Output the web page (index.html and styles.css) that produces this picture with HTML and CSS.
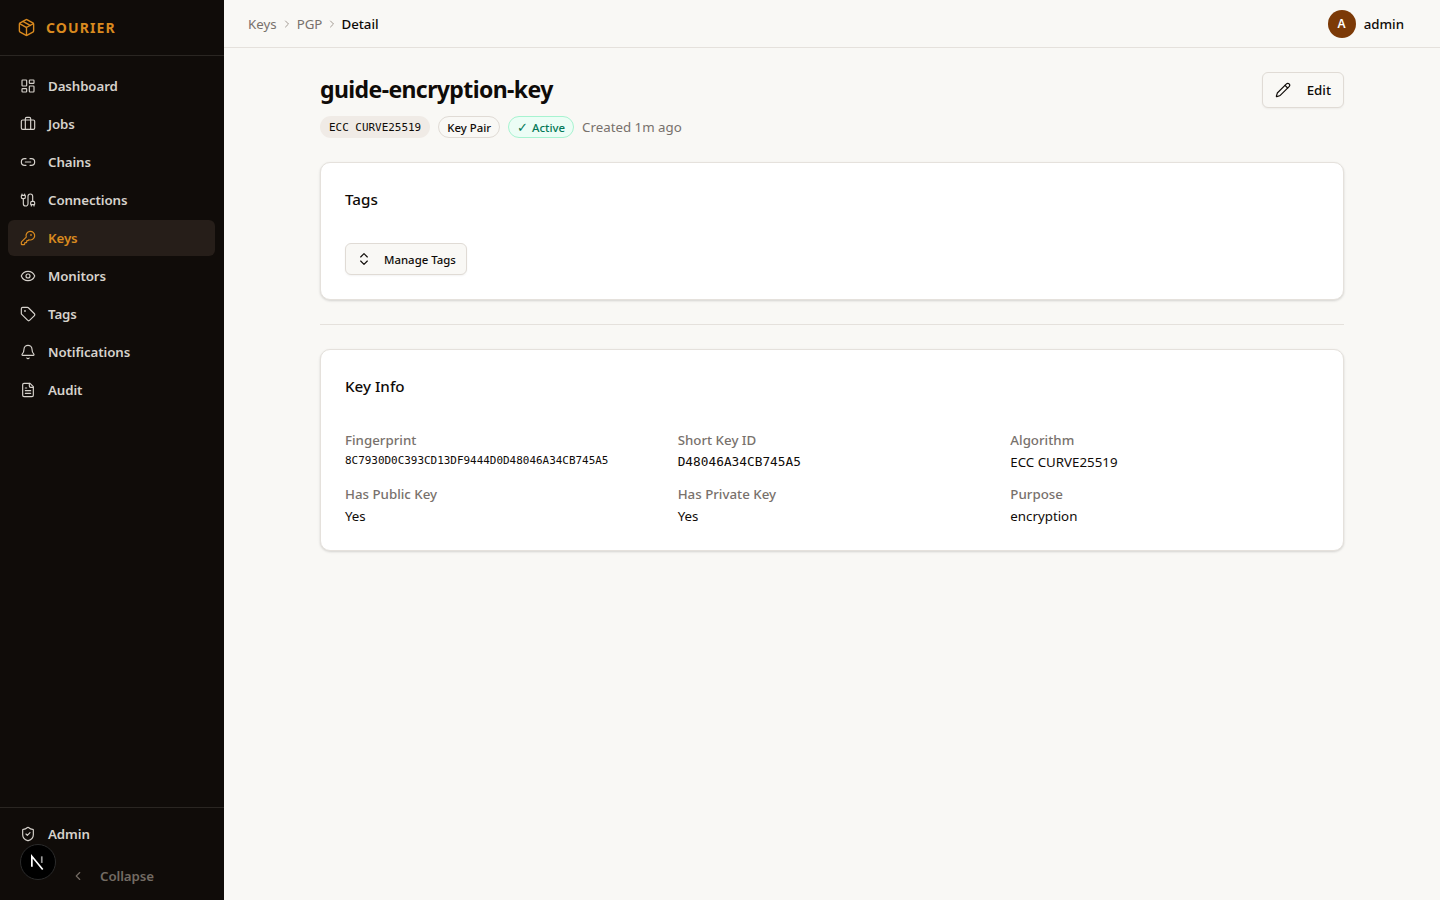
FILE: index.html
```html
<!DOCTYPE html>
<html lang="en">
<head>
<meta charset="utf-8">
<title>guide-encryption-key</title>
<link rel="stylesheet" href="styles.css">
</head>
<body>
<div class="app">
  <aside class="sidebar">
    <div class="brand">
      <svg class="brand-icon" viewBox="0 0 24 24"><path d="M11 21.73a2 2 0 0 0 2 0l7-4A2 2 0 0 0 21 16V8a2 2 0 0 0-1-1.73l-7-4a2 2 0 0 0-2 0l-7 4A2 2 0 0 0 3 8v8a2 2 0 0 0 1 1.73z"/><path d="M12 22V12"/><path d="m3.3 7 7.7 4.4a2 2 0 0 0 2 0L20.7 7"/><path d="m7.5 4.27 9 5.15"/></svg>
      <span class="brand-name">COURIER</span>
    </div>
    <nav class="nav">
      <a class="nav-item"><svg class="ico" viewBox="0 0 24 24"><rect x="3" y="3" width="7" height="9" rx="1"/><rect x="14" y="3" width="7" height="5" rx="1"/><rect x="14" y="12" width="7" height="9" rx="1"/><rect x="3" y="16" width="7" height="5" rx="1"/></svg>Dashboard</a>
      <a class="nav-item"><svg class="ico" viewBox="0 0 24 24"><path d="M16 20V4a2 2 0 0 0-2-2h-4a2 2 0 0 0-2 2v16"/><rect x="2" y="6" width="20" height="14" rx="2"/></svg>Jobs</a>
      <a class="nav-item"><svg class="ico" viewBox="0 0 24 24"><path d="M9 17H7A5 5 0 0 1 7 7h2"/><path d="M15 7h2a5 5 0 1 1 0 10h-2"/><line x1="8" x2="16" y1="12" y2="12"/></svg>Chains</a>
      <a class="nav-item"><svg class="ico" viewBox="0 0 24 24"><path d="M17 19a1 1 0 0 1-1-1v-2a2 2 0 0 1 2-2h2a2 2 0 0 1 2 2v2a1 1 0 0 1-1 1z"/><path d="M17 21v-2"/><path d="M19 14V6.500a1 1 0 0 0-7 0v11a1 1 0 0 1-7 0V10"/><path d="M21 21v-2"/><path d="M3 5V3"/><path d="M4 10a2 2 0 0 1-2-2V6a1 1 0 0 1 1-1h4a1 1 0 0 1 1 1v2a2 2 0 0 1-2 2z"/><path d="M7 5V3"/></svg>Connections</a>
      <a class="nav-item active"><svg class="ico" viewBox="0 0 24 24"><path d="M2.586 17.414A2 2 0 0 0 2 18.828V21a1 1 0 0 0 1 1h3a1 1 0 0 0 1-1v-1a1 1 0 0 1 1-1h1a1 1 0 0 0 1-1v-1a1 1 0 0 1 1-1h.172a2 2 0 0 0 1.414-.586l.814-.814a6.500 6.500 0 1 0-4-4z"/><circle cx="16.500" cy="7.500" r=".5"/></svg>Keys</a>
      <a class="nav-item"><svg class="ico" viewBox="0 0 24 24"><path d="M2.062 12.348a1 1 0 0 1 0-.696 10.750 10.750 0 0 1 19.876 0 1 1 0 0 1 0 .696 10.750 10.750 0 0 1-19.876 0"/><circle cx="12" cy="12" r="3"/></svg>Monitors</a>
      <a class="nav-item"><svg class="ico" viewBox="0 0 24 24"><path d="M12.586 2.586A2 2 0 0 0 11.172 2H4a2 2 0 0 0-2 2v7.172a2 2 0 0 0 .586 1.414l8.704 8.704a2.426 2.426 0 0 0 3.420 0l6.580-6.580a2.426 2.426 0 0 0 0-3.420z"/><circle cx="7.500" cy="7.500" r=".5"/></svg>Tags</a>
      <a class="nav-item"><svg class="ico" viewBox="0 0 24 24"><path d="M10.268 21a2 2 0 0 0 3.464 0"/><path d="M3.262 15.326A1 1 0 0 0 4 17h16a1 1 0 0 0 .740-1.673C19.410 13.956 18 12.499 18 8A6 6 0 0 0 6 8c0 4.499-1.411 5.956-2.738 7.326"/></svg>Notifications</a>
      <a class="nav-item"><svg class="ico" viewBox="0 0 24 24"><path d="M15 2H6a2 2 0 0 0-2 2v16a2 2 0 0 0 2 2h12a2 2 0 0 0 2-2V7z"/><path d="M14 2v4a2 2 0 0 0 2 2h4"/><path d="M10 9H8"/><path d="M16 13H8"/><path d="M16 17H8"/></svg>Audit</a>
    </nav>
    <div class="side-foot">
      <a class="nav-item"><svg class="ico" viewBox="0 0 24 24"><path d="M20 13c0 5-3.500 7.500-7.660 8.950a1 1 0 0 1-.670-.010C7.500 20.500 4 18 4 13V6a1 1 0 0 1 1-1c2 0 4.500-1.200 6.240-2.720a1.170 1.170 0 0 1 1.520 0C14.510 3.810 17 5 19 5a1 1 0 0 1 1 1z"/><path d="m9 12 2 2 4-4"/></svg>Admin</a>
      <a class="collapse"><svg class="ico-sm" viewBox="0 0 24 24"><path d="m15 18-6-6 6-6"/></svg>Collapse</a>
      <div class="next-badge"><svg viewBox="0 0 36 36"><path d="M11.500 23V12L23 26"/><path class="n-right" d="M22 12V19"/></svg></div>
    </div>
  </aside>
  <div class="main">
    <header class="topbar">
      <div class="crumbs">
        <span class="crumb">Keys</span>
        <svg class="crumb-sep" viewBox="0 0 24 24"><path d="m9 18 6-6-6-6"/></svg>
        <span class="crumb">PGP</span>
        <svg class="crumb-sep" viewBox="0 0 24 24"><path d="m9 18 6-6-6-6"/></svg>
        <span class="crumb current">Detail</span>
      </div>
      <div class="user"><span class="avatar">A</span><span class="user-name">admin</span></div>
    </header>
    <main class="content">
      <div class="head">
        <div>
          <h1 class="title">guide-encryption-key</h1>
          <div class="meta">
            <span class="badge badge-mono">ECC CURVE25519</span>
            <span class="badge badge-outline">Key Pair</span>
            <span class="badge badge-active"><span class="check">✓</span>Active</span>
            <span class="created">Created 1m ago</span>
          </div>
        </div>
        <button class="btn-edit"><svg class="ico-edit" viewBox="0 0 24 24"><path d="M21.174 6.812a1 1 0 0 0-3.986-3.987L3.842 16.174a2 2 0 0 0-.500.830l-1.321 4.352a.500.500 0 0 0 .623.622l4.353-1.320a2 2 0 0 0 .830-.497z"/><path d="m15 5 4 4"/></svg>Edit</button>
      </div>
      <section class="card">
        <h2 class="card-title">Tags</h2>
        <button class="btn-tags"><svg class="ico-updown" viewBox="0 0 24 24"><path d="m7 15 5 5 5-5"/><path d="m7 9 5-5 5 5"/></svg>Manage Tags</button>
      </section>
      <hr class="rule">
      <section class="card">
        <h2 class="card-title">Key Info</h2>
        <div class="info">
          <div class="field"><div class="label">Fingerprint</div><div class="value mono-sm">8C7930D0C393CD13DF9444D0D48046A34CB745A5</div></div>
          <div class="field"><div class="label">Short Key ID</div><div class="value mono">D48046A34CB745A5</div></div>
          <div class="field"><div class="label">Algorithm</div><div class="value">ECC CURVE25519</div></div>
          <div class="field"><div class="label">Has Public Key</div><div class="value">Yes</div></div>
          <div class="field"><div class="label">Has Private Key</div><div class="value">Yes</div></div>
          <div class="field"><div class="label">Purpose</div><div class="value">encryption</div></div>
        </div>
      </section>
    </main>
  </div>
</div>
</body>
</html>
```
FILE: styles.css
```css
* { box-sizing: border-box; }
html, body { margin: 0; height: 100%; }
body { font-family: "Noto Sans", "Open Sans", sans-serif; background: #f9f8f5; color: #0f0b08; font-size: 13.3px; }
.app { display: flex; height: 900px; overflow: hidden; }

.sidebar { position: relative; width: 224px; flex: none; background: #100c09; display: flex; flex-direction: column; }
.brand { height: 56px; padding: 0 0 1px 17px; display: flex; align-items: center; gap: 10px; border-bottom: 1px solid #2a2622; }
.brand-icon { width: 19px; height: 19px; fill: none; stroke: #d98a1f; stroke-width: 1.75; stroke-linecap: round; stroke-linejoin: round; }
.brand-name { color: #d98a1f; font-weight: 700; font-size: 14px; letter-spacing: 1.1px; }
.nav { flex: 1; padding: 12px 9px 0 8px; display: flex; flex-direction: column; gap: 2px; }
.nav-item { height: 36px; padding: 0 12px; display: flex; align-items: center; gap: 12px; border-radius: 6px; color: #d6d2cc; font-size: 13.3px; font-weight: 600; letter-spacing: -0.1px; }
.nav-item.active { background: #261e19; color: #d98a1f; }
.ico { width: 16px; height: 16px; flex: none; fill: none; stroke: currentColor; stroke-width: 1.75; stroke-linecap: round; stroke-linejoin: round; }
.side-foot { border-top: 1px solid #2a2622; height: 93px; padding: 8px 9px 0 8px; }
.collapse { position: absolute; left: 71px; top: 866px; height: 20px; display: flex; align-items: center; gap: 15px; color: #736b63; font-size: 13.3px; font-weight: 600; letter-spacing: -0.1px; }
.ico-sm { width: 14px; height: 14px; fill: none; stroke: currentColor; stroke-width: 2; stroke-linecap: round; stroke-linejoin: round; }
.next-badge { position: absolute; left: 20px; top: 844px; width: 36px; height: 36px; border-radius: 50%; background: #000; border: 1px solid #2b2b2b; }
.next-badge svg { display: block; width: 34px; height: 34px; fill: none; stroke: #fff; stroke-width: 1.8; }
.next-badge .n-right { stroke: #9a9a9a; }

.main { flex: 1; min-width: 0; display: flex; flex-direction: column; }
.topbar { height: 48px; flex: none; border-bottom: 1px solid #e5e1dc; padding: 0 36px 0 24px; display: flex; align-items: center; justify-content: space-between; }
.crumbs { display: flex; align-items: center; gap: 4px; font-size: 13.3px; color: #78716c; }
.crumb { line-height: 20px; }
.crumb.current { color: #0f0b08; font-weight: 500; margin-left: -1px; }
.crumb-sep { width: 12px; height: 12px; fill: none; stroke: #a39b93; stroke-width: 2; stroke-linecap: round; stroke-linejoin: round; }
.user { display: flex; align-items: center; gap: 8px; }
.avatar { width: 28px; height: 28px; border-radius: 50%; background: #7c3a07; color: #fff; font-size: 12px; font-weight: 600; display: flex; align-items: center; justify-content: center; }
.user-name { font-size: 13.3px; font-weight: 500; }

.content { width: 1024px; margin: 0 auto; padding-top: 24px; }
.head { display: flex; justify-content: space-between; align-items: flex-start; margin-bottom: 24px; }
.title { margin: 0; font-size: 23px; line-height: 34px; font-weight: 700; letter-spacing: -0.6px; }
.meta { display: flex; align-items: center; gap: 8px; margin-top: 10px; height: 22px; }
.badge { height: 22px; border-radius: 11px; padding: 0 8px; display: inline-flex; align-items: center; font-size: 11.4px; font-weight: 500; }
.badge-mono { background: #f0ebe6; font-family: "DejaVu Sans Mono", monospace; font-size: 10.95px; font-weight: 400; padding: 0 9px; }
.badge-outline { border: 1px solid #e0dbd5; }
.badge-active { background: #ecfdf5; border: 1px solid #a7f3d0; color: #047857; gap: 4px; }
.check { font-size: 13px; line-height: 1; }
.created { font-size: 13.3px; color: #78716c; }
.btn-edit { height: 36px; padding: 0 12px; display: flex; align-items: center; gap: 16px; background: #f9f8f5; border: 1px solid #e0dbd5; border-radius: 6px; font: 500 13.3px "Noto Sans", sans-serif; color: #0f0b08; box-shadow: 0 1px 2px rgba(0,0,0,.05); }
.ico-edit { width: 16px; height: 16px; fill: none; stroke: currentColor; stroke-width: 1.75; stroke-linecap: round; stroke-linejoin: round; }

.card { background: #fff; border: 1px solid #e5e1dc; border-radius: 10px; padding: 24px; box-shadow: 0 1px 3px rgba(0,0,0,.1), 0 1px 2px rgba(0,0,0,.06); }
.card-title { margin: 0; font-size: 15.2px; line-height: 24px; font-weight: 500; }
.btn-tags { margin-top: 32px; height: 32px; padding: 0 10px; display: flex; align-items: center; gap: 12px; background: #f9f8f5; border: 1px solid #e0dbd5; border-radius: 6px; font: 500 11.4px "Noto Sans", sans-serif; color: #0f0b08; box-shadow: 0 1px 2px rgba(0,0,0,.05); }
.ico-updown { width: 16px; height: 16px; fill: none; stroke: currentColor; stroke-width: 1.75; stroke-linecap: round; stroke-linejoin: round; }
.rule { border: 0; border-top: 1px solid #e5e1dc; margin: 24px 0; }
.info { margin-top: 32px; display: grid; grid-template-columns: repeat(3, 1fr); column-gap: 24px; row-gap: 12px; }
.label { font-size: 13.3px; line-height: 20px; font-weight: 500; color: #78716c; margin-bottom: 2px; }
.value { font-size: 13.3px; line-height: 20px; }
.value.mono { font-family: "DejaVu Sans Mono", monospace; font-size: 12.8px; }
.value.mono-sm { font-family: "DejaVu Sans Mono", monospace; font-size: 10.95px; line-height: 18px; }
```
